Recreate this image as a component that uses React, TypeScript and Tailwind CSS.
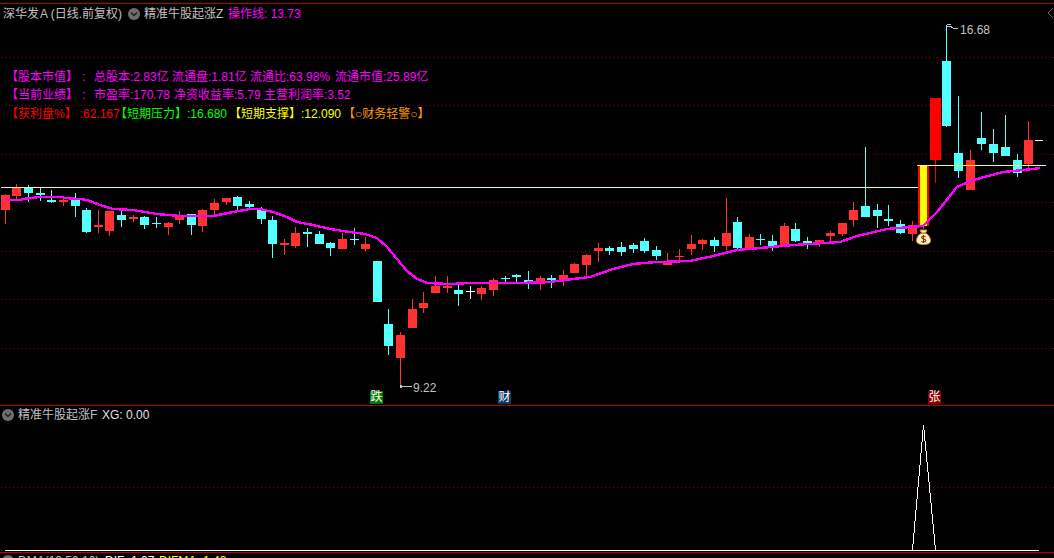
const CYAN = '#54ffff';
const RED = '#ff3232';

// [x, kind, bodyTop, bodyBottom, high, low]
const candles: [number, string, number, number, number, number][] = [
  [5, 'r', 195, 210, 194, 224],
  [16, 'r', 188, 196, 184, 199],
  [28, 'c', 188, 193, 185, 202],
  [40, 'c', 193, 195, 188, 201],
  [51, 'c', 200, 202, 190, 203],
  [63, 'r', 200, 202, 198, 206],
  [75, 'c', 200, 206, 193, 217],
  [86, 'c', 210, 232, 208, 233],
  [98, 'r', 225, 227, 210, 233],
  [109, 'r', 211, 231, 211, 236],
  [121, 'c', 215, 220, 208, 227],
  [133, 'r', 217, 219, 215, 222],
  [144, 'c', 217, 225, 216, 229],
  [156, 'c', 223, 224, 217, 228],
  [168, 'r', 223, 227, 222, 235],
  [179, 'r', 216, 220, 211, 224],
  [191, 'c', 214, 225, 214, 235],
  [202, 'r', 210, 226, 209, 232],
  [214, 'r', 203, 210, 199, 215],
  [226, 'r', 198, 202, 198, 205],
  [237, 'c', 197, 206, 196, 210],
  [249, 'c', 204, 207, 201, 209],
  [261, 'c', 210, 219, 207, 224],
  [272, 'c', 220, 244, 216, 258],
  [284, 'r', 243, 245, 239, 255],
  [295, 'r', 233, 246, 227, 248],
  [307, 'c', 232, 234, 228, 247],
  [319, 'c', 234, 244, 231, 244],
  [330, 'c', 243, 248, 242, 256],
  [342, 'r', 239, 249, 233, 249],
  [354, 'c', 239, 240, 228, 245],
  [365, 'r', 244, 249, 237, 251],
  [377, 'c', 261, 302, 261, 302],
  [388, 'c', 324, 346, 309, 355],
  [400, 'r', 335, 358, 332, 385],
  [412, 'r', 309, 328, 299, 328],
  [423, 'r', 303, 308, 292, 313],
  [435, 'r', 286, 293, 276, 293],
  [447, 'r', 286, 288, 276, 293],
  [458, 'c', 290, 294, 285, 306],
  [470, 'w', 291, 292, 286, 299],
  [481, 'r', 288, 294, 286, 300],
  [493, 'r', 280, 290, 278, 296],
  [505, 'c', 278, 279, 276, 283],
  [516, 'c', 275, 277, 274, 283],
  [528, 'c', 280, 282, 271, 289],
  [540, 'r', 278, 284, 276, 290],
  [551, 'c', 278, 280, 275, 288],
  [563, 'r', 275, 281, 270, 286],
  [574, 'r', 264, 273, 263, 273],
  [586, 'r', 255, 265, 254, 277],
  [598, 'r', 248, 251, 243, 262],
  [609, 'c', 248, 251, 246, 255],
  [621, 'c', 247, 252, 242, 256],
  [633, 'c', 245, 249, 243, 253],
  [644, 'c', 241, 251, 238, 253],
  [656, 'c', 250, 256, 246, 260],
  [667, 'r', 262, 265, 253, 265],
  [679, 'r', 256, 257, 249, 263],
  [691, 'r', 244, 249, 235, 255],
  [702, 'r', 240, 244, 239, 250],
  [714, 'c', 240, 246, 237, 252],
  [726, 'r', 233, 246, 198, 250],
  [737, 'c', 222, 248, 217, 249],
  [749, 'r', 237, 248, 234, 249],
  [760, 'c', 239, 240, 234, 245],
  [772, 'c', 241, 247, 235, 251],
  [784, 'r', 226, 246, 223, 247],
  [795, 'c', 229, 241, 223, 242],
  [807, 'c', 241, 244, 237, 249],
  [819, 'r', 240, 244, 240, 247],
  [830, 'r', 233, 236, 231, 241],
  [842, 'r', 223, 234, 223, 236],
  [853, 'r', 210, 220, 202, 227],
  [865, 'c', 206, 217, 147, 217],
  [877, 'c', 210, 216, 204, 228],
  [888, 'c', 219, 221, 205, 226],
  [900, 'c', 224, 233, 220, 234],
  [912, 'r', 225, 234, 221, 241],
  [958, 'c', 153, 171, 96, 178],
  [970, 'r', 160, 190, 150, 190],
  [981, 'c', 138, 144, 112, 150],
  [993, 'c', 144, 153, 129, 162],
  [1005, 'c', 147, 156, 115, 156],
  [1017, 'c', 160, 173, 154, 177],
  [1028, 'r', 140, 164, 121, 170],
];

const maLine =
  '5,200 21,200 23,199 40,197 43,197 63,197 64,198 80,199 87,200 100,205 113,209 133,210 157,214 180,216 213,216 233,212 250,209 260,209 273,212 287,217 297,222 313,225 330,229 350,232 365,234 377,238 387,247 397,259 407,271 417,279 427,283 450,284 470,283 517,283 550,282 573,279 590,277 613,269 633,264 657,262 690,261 713,256 737,250 760,248 793,245 840,242 857,236 887,229 923,226 937,212 957,187 973,180 1003,172 1033,169 1040,168';

const gridRows = [57, 105, 154, 202, 251, 299, 348];
const ticks = Array.from({ length: 30 }, (_, i) => 1025 - i * 35);

// dotted grid row, one pixel every four
const dots = (y: number) => {
  let d = '';
  for (let x = 1; x < 1054; x += 4) d += `M${x} ${y}h1v1h-1z`;
  return d;
};

function CircleIcon() {
  return (
    <svg width="12" height="12" viewBox="0 0 12 12" className="shrink-0">
      <circle cx="6" cy="6" r="6" fill="#6e6e6e" />
      <path d="M3 4.5 L6 7.5 L9 4.5" fill="none" stroke="#1c1c1c" strokeWidth="1.4" />
    </svg>
  );
}

function MoneyBag() {
  return (
    <svg width="15" height="16" viewBox="0 0 15 16" className="absolute left-[916px] top-[225px]">
      <path d="M4 1 L11 1 L9.5 4 C13 6 14.5 9 14.5 11.5 C14.5 14.5 12 15.5 7.5 15.5 C3 15.5 0.5 14.5 0.5 11.5 C0.5 9 2 6 5.5 4 Z" fill="#fff2c0" stroke="#c98a1e" strokeWidth="1" />
      <rect x="5" y="3.5" width="5" height="1.2" fill="#a8641a" />
      <path d="M9.6 7.6 C8.6 6.8 5.6 6.8 5.6 8.6 C5.6 10.6 9.8 9.6 9.8 11.6 C9.8 13.4 6.4 13.4 5.4 12.4 M7.5 6 L7.5 14" fill="none" stroke="#8e2a12" strokeWidth="1.1" />
    </svg>
  );
}

export default function App() {
  return (
    <div className="w-[1054px] h-[558px] overflow-hidden bg-black pt-[3px] text-[12px] leading-[18px] text-[#c0c0c0] font-['Liberation_Sans','Noto_Sans_CJK_SC',sans-serif]">
      {/* main chart */}
      <div className="relative h-[402px] border-t border-[#b80000]">
        <svg width="1054" height="401" viewBox="0 4 1054 401" shapeRendering="crispEdges" className="absolute inset-0">
          {ticks.map(x => (
            <rect key={x} x={x} y={0} width="1" height="4" fill="#b80000" />
          ))}
          {gridRows.map(y => (
            <path key={y} d={dots(y)} fill="#8c0000" />
          ))}
          {candles.map(([x, kind, top, bottom, high, low]) => {
            const color = kind === 'r' ? RED : kind === 'w' ? '#ffffff' : CYAN;
            return (
              <g key={x} fill={color}>
                <rect x={x} y={high} width="1" height={low - high} />
                <rect x={x - 4} y={top} width="9" height={bottom - top} />
              </g>
            );
          })}
          {/* big limit-up candle and gap candle */}
          <rect x="935" y="160" width="1" height="23" fill="#ff0000" />
          <rect x="930" y="98" width="11" height="62" fill="#ff0000" />
          <rect x="946" y="25" width="1" height="102" fill={CYAN} />
          <rect x="942" y="61" width="9" height="65" fill={CYAN} />
          <rect x="923" y="226" width="1" height="3" fill={RED} />
          <rect x="918" y="165" width="11" height="61" fill="#ff0000" />
          <rect x="920" y="165" width="7" height="61" fill="#ffff00" />
          <rect x="1" y="187" width="917" height="1" fill="#ffff44" />
          <rect x="917" y="165" width="129" height="1" fill="#ffff44" />
          <rect x="1035" y="140" width="8" height="1" fill="#ffffff" />
          <polyline points={maLine} fill="none" stroke="#ff00ff" strokeWidth="2.4" />
          {/* low / high pointers */}
          <path d="M400 386 H412 M400 385 H402 M400 387 H402" stroke="#c0c0c0" fill="none" />
          <path d="M947 24 H951 M947 26 H950 M950 26 L953 28 H958" stroke="#c0c0c0" fill="none" />
          <path d="M1053 8 L1048 13 L1053 18" stroke="#6a6a6a" fill="none" shapeRendering="auto" />
        </svg>
        <div className="relative flex h-[19px] items-center pl-[3px] pt-[1px]">
          <span className="w-[125px] whitespace-nowrap">
            深华发<span className="ml-[1px]">A</span> (日线.前复权)
          </span>
          <CircleIcon />
          <span className="ml-[4px] w-[84px] whitespace-nowrap">精准牛股起涨Z</span>
          <span className="whitespace-nowrap text-[#ff00ff]">操作线: 13.73</span>
        </div>
        <div className="relative mt-[45px] flex flex-col pl-[6px] whitespace-nowrap">
          <div className="flex h-[18px] text-[#ff00ff]">
            <span className="w-[88px]">【股本市值】<span className="ml-[4px]">:</span></span>
            <span className="w-[78px]">总股本:2.83亿</span>
            <span className="w-[78px]">流通盘:1.81亿</span>
            <span className="w-[85px]">流通比:63.98%</span>
            <span>流通市值:25.89亿</span>
          </div>
          <div className="flex h-[18px] text-[#ff00ff]">
            <span className="w-[88px]">【当前业绩】<span className="ml-[4px]">:</span></span>
            <span className="w-[80px]">市盈率:170.78</span>
            <span className="w-[90px]">净资收益率:5.79</span>
            <span>主营利润率:3.52</span>
          </div>
          <div className="mt-[1px] flex h-[18px]">
            <span className="w-[109px] text-[#ff0000]">【获利盘%】<span className="ml-[3px]">:62.167</span></span>
            <span className="w-[114px] text-[#00ff00]">【短期压力】:16.680</span>
            <span className="w-[114px] text-[#ffff00]">【短期支撑】:12.090</span>
            <span className="text-[#ff9900]">【○财务轻警○】</span>
          </div>
        </div>
        <span className="absolute left-[960px] top-[17px]">16.68</span>
        <span className="absolute left-[413px] top-[375px]">9.22</span>
        <span className="absolute left-[370px] top-[387px] h-[13px] w-[13px] bg-[#007a00] text-center leading-[13px] text-white">跌</span>
        <span className="absolute left-[498px] top-[387px] h-[13px] w-[13px] bg-[#0a3a6a] text-center leading-[13px] text-white">财</span>
        <span className="absolute left-[928px] top-[387px] h-[13px] w-[13px] bg-[#8b0000] text-center leading-[13px] text-white">张</span>
        <MoneyBag />
      </div>

      {/* sub chart */}
      <div className="relative h-[147px] border-t border-[#b80000]">
        <svg width="1054" height="146" viewBox="0 406 1054 146" shapeRendering="crispEdges" className="absolute inset-0">
          <path d={dots(487)} fill="#8c0000" />
          <rect x="5" y="550" width="1034" height="1" fill="#ffffff" />
          <polyline points="912.5,550 923.5,425 935.5,550" fill="none" stroke="#ffffff" strokeWidth="1" />
        </svg>
        <div className="relative flex h-[18px] items-center pl-[2px] whitespace-nowrap">
          <CircleIcon />
          <span className="ml-[4px] w-[84px]">精准牛股起涨F</span>
          <span className="text-[#e0e0e0]">XG: 0.00</span>
        </div>
      </div>

      {/* next indicator, cut off by the window */}
      <div className="flex h-[16px] items-center border-t border-[#b80000] pl-[2px] whitespace-nowrap">
        <CircleIcon />
        <span className="ml-[4px] w-[87px]">DMA(10.50.10)</span>
        <span className="w-[54px] text-white">DIF: 1.07</span>
        <span className="text-[#ffff00]">DIFMA: 1.43</span>
      </div>
    </div>
  );
}
